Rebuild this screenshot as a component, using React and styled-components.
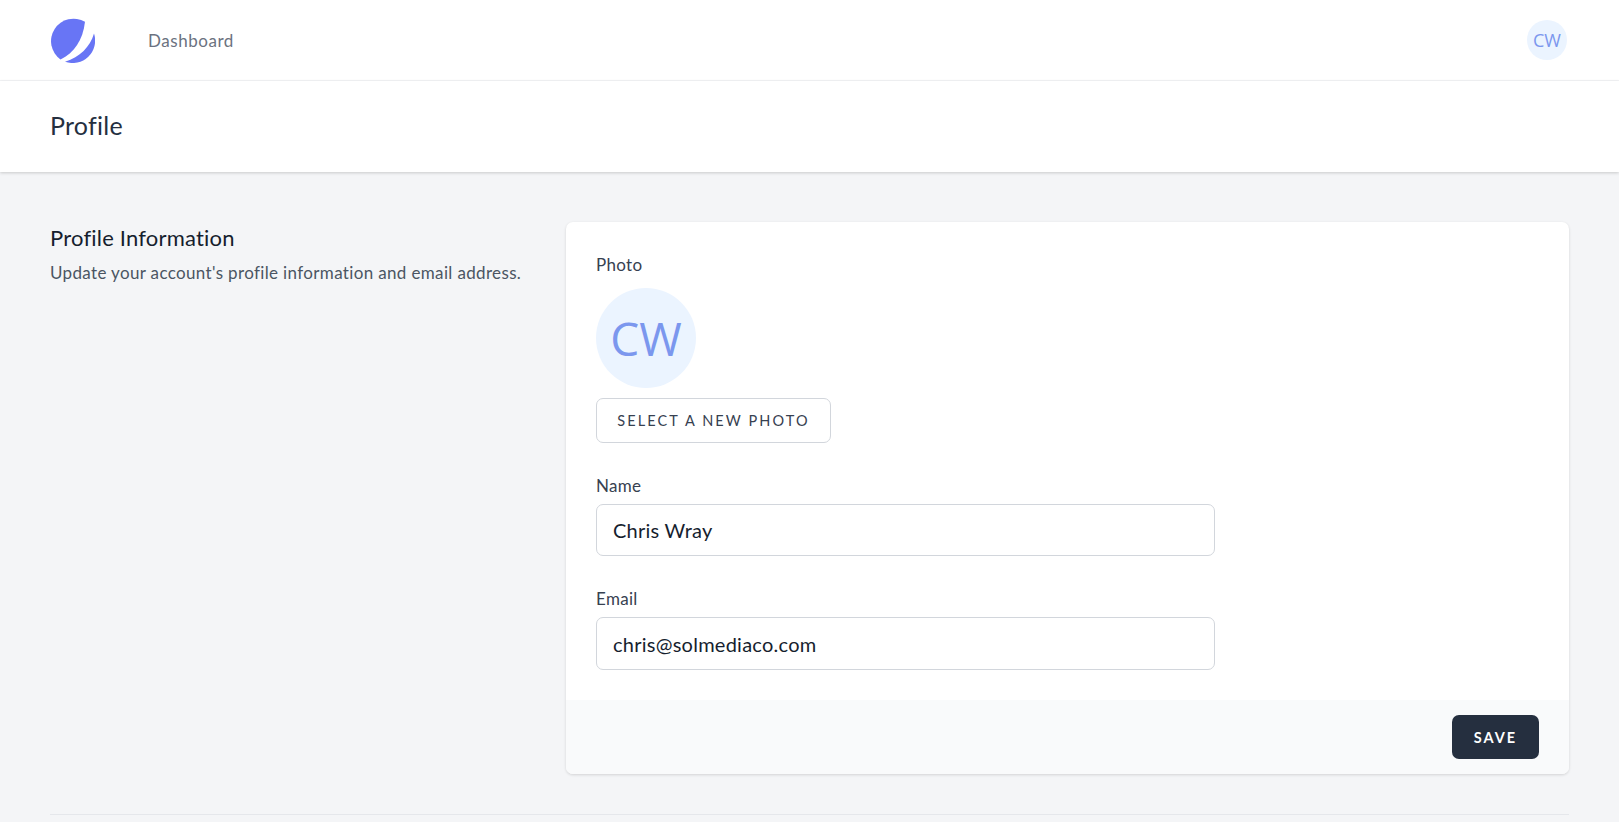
import styled, { createGlobalStyle } from "styled-components";

const GlobalStyle = createGlobalStyle`
  html, body {
    margin: 0;
    height: 100%;
    overflow: hidden;
    background-color: #f4f5f7;
    font-family: "Lato", "Liberation Sans", sans-serif;
  }
`;

const Nav = styled.nav`
  height: 80px;
  padding: 0 52px 0 50px;
  background-color: #fff;
  border-bottom: 1px solid #f4f5f7;
  display: flex;
  align-items: center;
  justify-content: space-between;
`;

const NavLeft = styled.div`
  display: flex;
  align-items: center;
  gap: 53px;
`;

const NavLink = styled.a`
  font-size: 17px;
  letter-spacing: 0.55px;
  color: #6b7280;
`;

const Avatar = styled.div`
  width: ${(p) => p.$size}px;
  height: ${(p) => p.$size}px;
  border-radius: 50%;
  background-color: #ebf4ff;
  color: #7b97ee;
  font-family: "Open Sans", sans-serif;
  font-size: ${(p) => p.$font}px;
  display: flex;
  align-items: center;
  justify-content: center;
`;

const Header = styled.header`
  box-sizing: border-box;
  height: 91px;
  padding: 0 50px 4px;
  background-color: #fff;
  box-shadow: 0 1px 3px rgba(0, 0, 0, 0.18);
  display: flex;
  align-items: center;
`;

const Title = styled.h2`
  margin: 0;
  font-size: 25px;
  font-weight: 400;
  letter-spacing: 0.25px;
  color: #252f3f;
`;

const Main = styled.main`
  padding: 50px 50px 0;
`;

const Section = styled.section`
  display: grid;
  grid-template-columns: 516px 1fr;
`;

const Intro = styled.div`
  padding-top: 2px;
`;

const IntroTitle = styled.h3`
  margin: 0 0 10px;
  font-size: 22px;
  line-height: 28px;
  font-weight: 400;
  letter-spacing: 0.2px;
  color: #161e2e;
`;

const IntroText = styled.p`
  margin: 0;
  font-size: 17px;
  line-height: 22px;
  letter-spacing: 0.35px;
  color: #4b5563;
`;

const Card = styled.form`
  background-color: #fff;
  border-radius: 7px;
  box-shadow: 0 1px 3px rgba(0, 0, 0, 0.14);
  overflow: hidden;
`;

const CardBody = styled.div`
  padding: 31px 30px 30px;
  display: flex;
  flex-direction: column;
  align-items: flex-start;
`;

const Label = styled.label`
  display: block;
  margin-bottom: ${(p) => p.$bottom}px;
  font-size: 17px;
  line-height: 24px;
  letter-spacing: 0.3px;
  color: #374151;
`;

const Field = styled.div`
  width: 619px;
  margin-top: 31px;
`;

const Input = styled.input`
  box-sizing: border-box;
  display: block;
  width: 100%;
  height: ${(p) => p.$height}px;
  padding: 0 16px;
  border: 1px solid #d2d6dc;
  border-radius: 7px;
  background-color: #fff;
  font: inherit;
  font-size: 20px;
  letter-spacing: 0.25px;
  color: #161e2e;
`;

const OutlineButton = styled.button`
  box-sizing: border-box;
  width: 235px;
  height: 45px;
  margin-top: 10px;
  border: 1px solid #d2d6dc;
  border-radius: 7px;
  background-color: #fff;
  font: inherit;
  font-size: 14.5px;
  letter-spacing: 2.1px;
  color: #374151;
`;

const CardFooter = styled.div`
  height: 74px;
  padding: 0 30px;
  background-color: #f9fafb;
  display: flex;
  align-items: center;
  justify-content: flex-end;
`;

const SaveButton = styled.button`
  width: 87px;
  height: 44px;
  border: none;
  border-radius: 7px;
  background-color: #252f3f;
  font: inherit;
  font-size: 14.5px;
  font-weight: 700;
  letter-spacing: 2px;
  color: #fff;
`;

const Divider = styled.hr`
  margin: 40px 0 0;
  border: none;
  border-top: 1px solid #e5e7eb;
`;

const Logo = () => (
  <svg width="45" height="45" viewBox="0 0 45 45">
    <path d="M35 3.8A22.5 22.5 0 0 0 10.5 41.5C24 35 33 22 35 3.8Z" fill="#6875f5" />
    <path d="M44 15.5A22.5 22.5 0 0 1 15 43.7C30 39 40 29 44 15.5Z" fill="#6875f5" />
  </svg>
);

const App = () => {
  return (
    <>
      <GlobalStyle />
      <Nav>
        <NavLeft>
          <Logo />
          <NavLink>Dashboard</NavLink>
        </NavLeft>
        <Avatar $size={40} $font={18}>
          CW
        </Avatar>
      </Nav>
      <Header>
        <Title>Profile</Title>
      </Header>
      <Main>
        <Section>
          <Intro>
            <IntroTitle>Profile Information</IntroTitle>
            <IntroText>Update your account's profile information and email address.</IntroText>
          </Intro>
          <Card>
            <CardBody>
              <Label $bottom={11}>Photo</Label>
              <Avatar $size={100} $font={46}>
                CW
              </Avatar>
              <OutlineButton type="button">SELECT A NEW PHOTO</OutlineButton>
              <Field>
                <Label $bottom={6}>Name</Label>
                <Input $height={52} defaultValue="Chris Wray" />
              </Field>
              <Field>
                <Label $bottom={6}>Email</Label>
                <Input $height={53} defaultValue="chris@solmediaco.com" />
              </Field>
            </CardBody>
            <CardFooter>
              <SaveButton type="button">SAVE</SaveButton>
            </CardFooter>
          </Card>
        </Section>
        <Divider />
      </Main>
    </>
  );
};

export default App;
